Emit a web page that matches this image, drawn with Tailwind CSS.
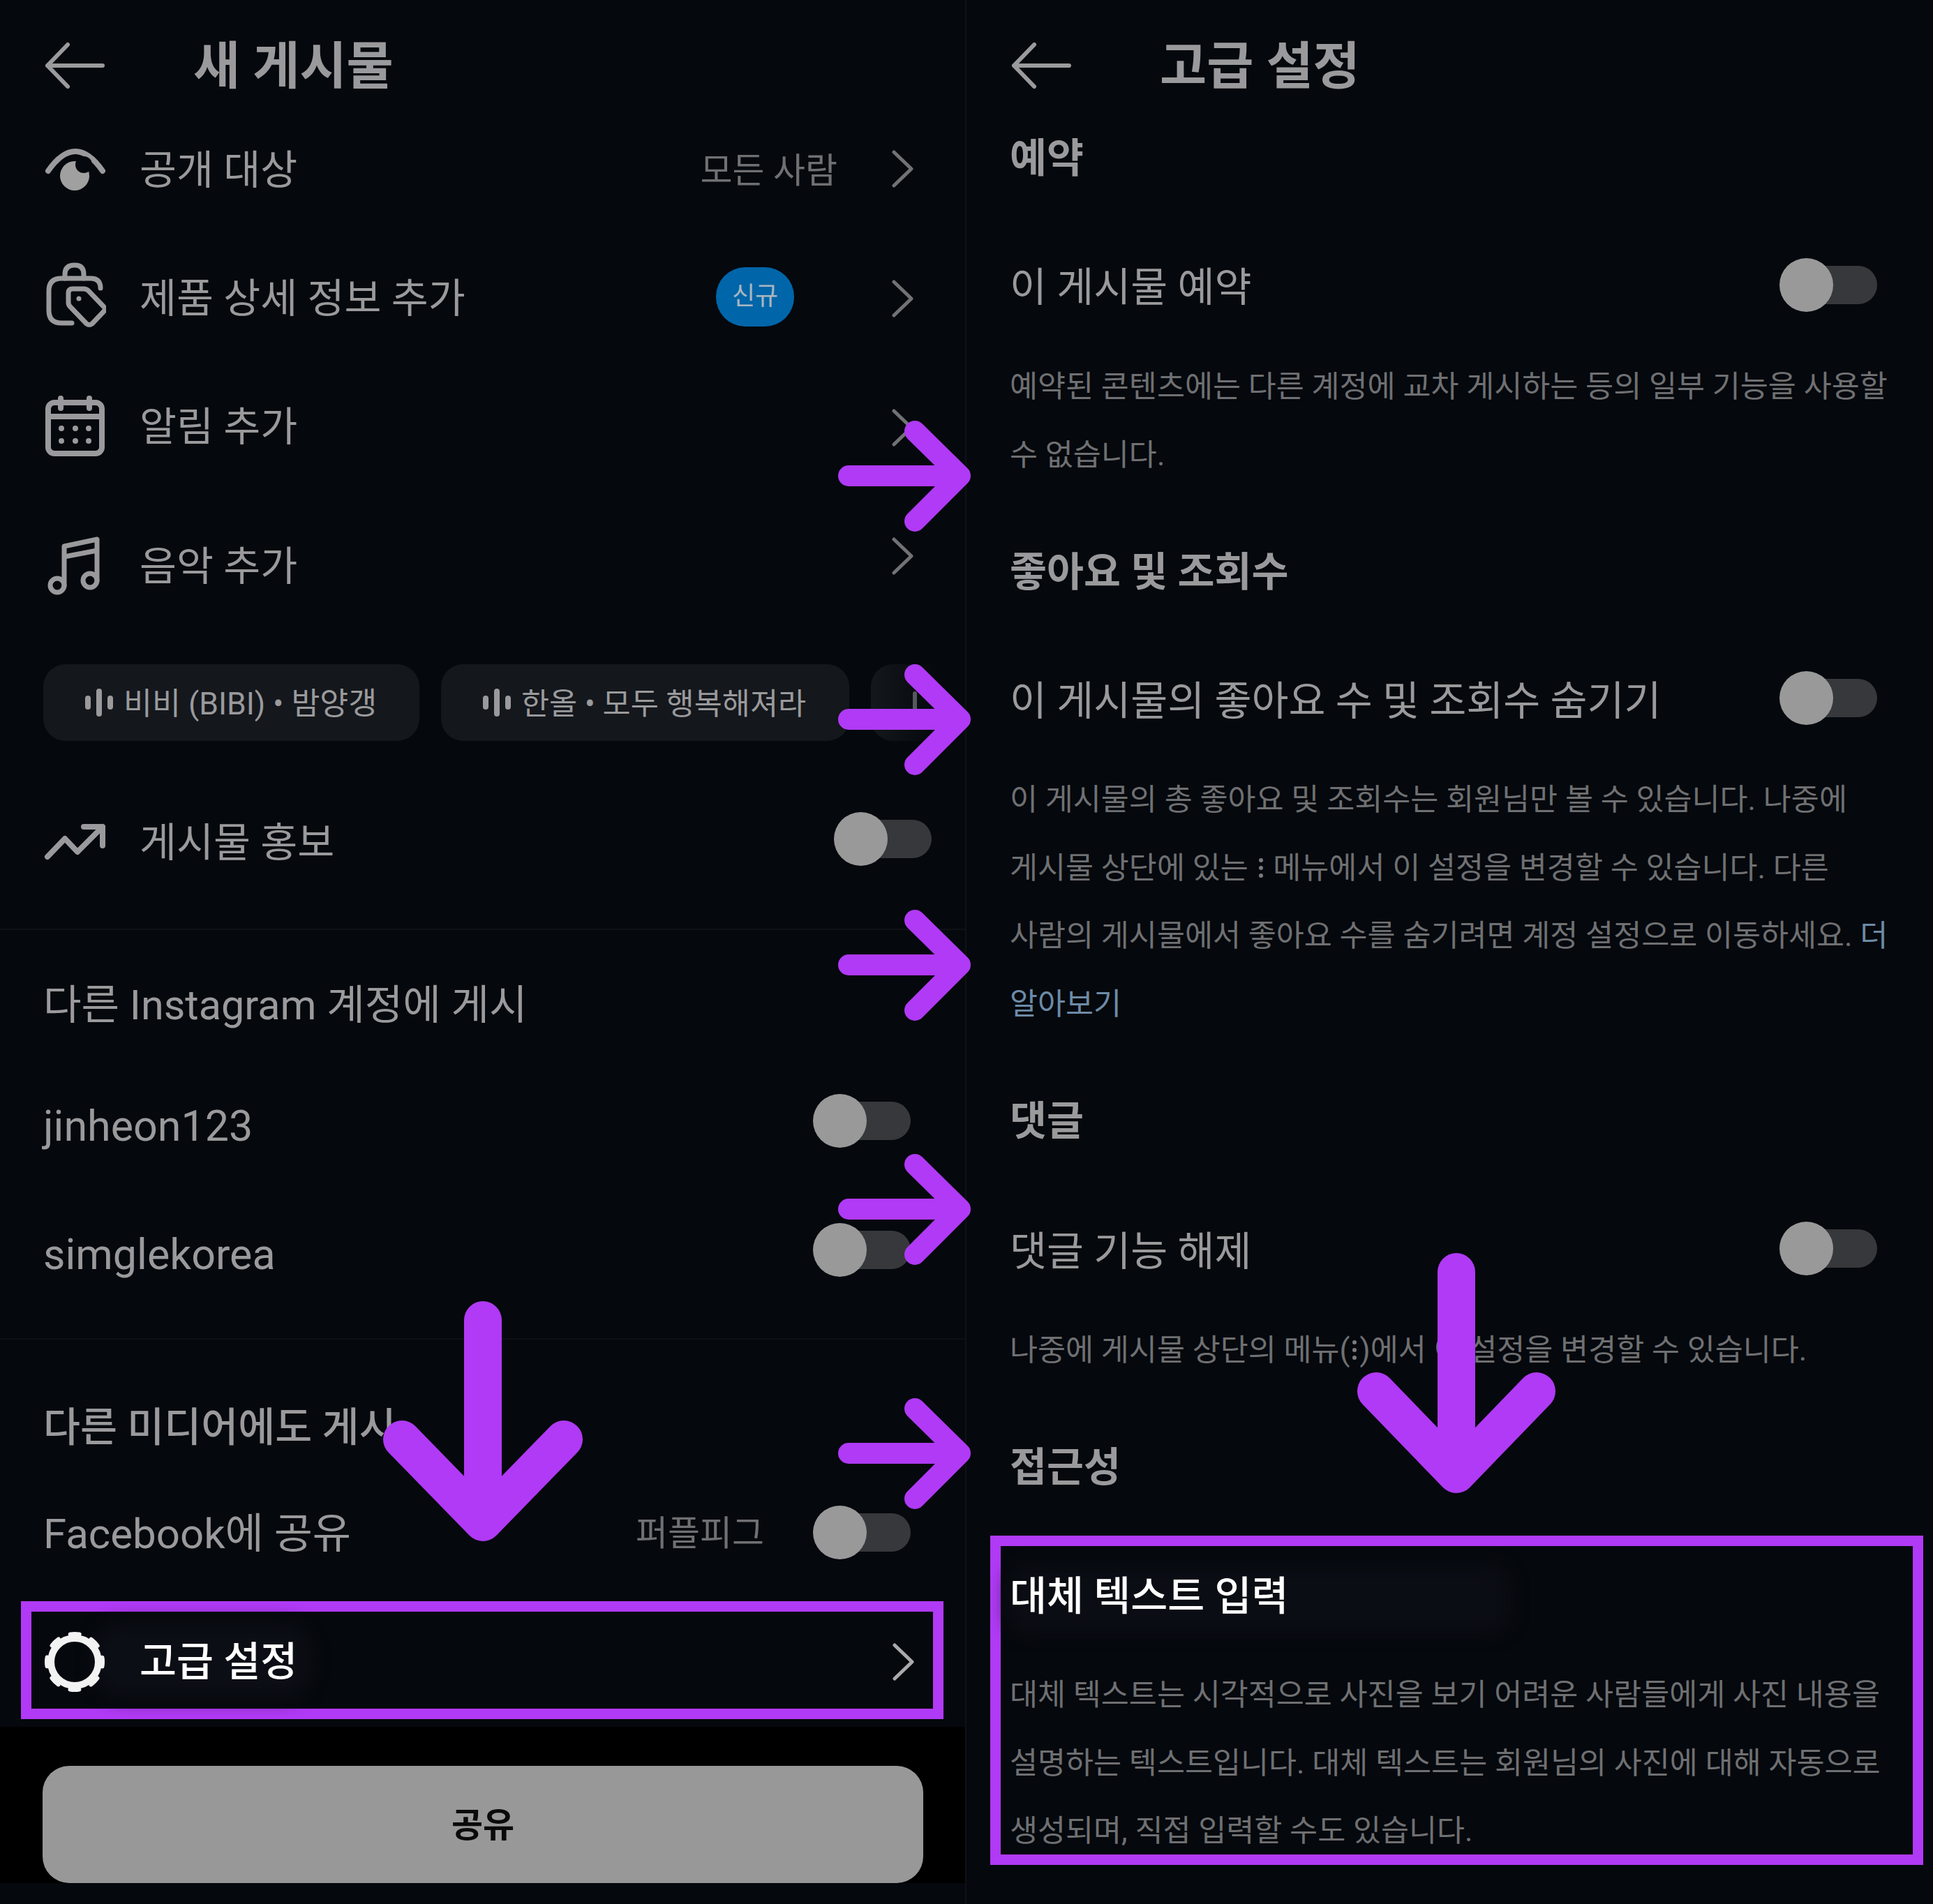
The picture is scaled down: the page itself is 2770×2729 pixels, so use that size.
<!DOCTYPE html>
<html lang="ko">
<head>
  <meta charset="UTF-8">
  <title>새 게시물 / 고급 설정</title>
  <script src="https://cdn.jsdelivr.net/npm/@tailwindcss/browser@4"></script>
</head>
<body class="relative w-[2770px] h-[2729px] overflow-hidden bg-[#05080d] text-[#9a9a9c] text-[57.6px] font-[Roboto,'Noto_Sans_CJK_KR',sans-serif]">
  <div class="grid grid-cols-[1385px_1385px] h-full">

    <!-- left screen: new post -->
    <section class="border-r-2 border-[#0e1116] h-full">
      <header class="flex items-center h-[184px] pl-[62px]">
        <svg class="w-[215px] h-[90px] shrink-0" viewBox="0 0 215 90" fill="none" stroke="#9a9a9c" stroke-width="6" stroke-linecap="round" stroke-linejoin="round"><path d="M85 47H6M35 17L6 47L35 77"/></svg>
        <h1 class="pt-[7px] text-[73px] font-bold leading-none">새 게시물</h1>
      </header>

      <div class="flex items-center h-[116px] pl-[62px] pr-[74px]">
        <svg class="w-[90px] h-[90px] shrink-0" viewBox="0 0 90 90" fill="none" stroke="#9a9a9c" stroke-width="8" stroke-linecap="round"><path d="M7 48Q46 -8 85 48"/><circle cx="45" cy="55" r="21" fill="#a0a0a0" stroke="none"/><circle cx="58" cy="39" r="12" fill="#05080d" stroke="none"/></svg>
        <span class="ml-[48px] pt-[7px]">공개 대상</span>
        <span class="ml-auto pt-[7px] text-[50px] text-[#6f7072]">모든 사람</span>
        <svg class="ml-[77px] w-[32px] h-[54px] shrink-0" viewBox="0 0 32 54" fill="none" stroke="#717274" stroke-width="5" stroke-linecap="round" stroke-linejoin="round"><path d="M4 3L29 27L4 51"/></svg>
      </div>

      <div class="flex items-center h-[250px] pl-[62px] pr-[74px]">
        <svg class="w-[90px] h-[100px] shrink-0" viewBox="0 0 90 100" fill="none" stroke="#9a9a9c" stroke-width="7" stroke-linecap="round" stroke-linejoin="round"><path d="M41 88H26Q8 88 8 70V42Q8 24 26 24H68Q82 24 82 38"/><path d="M31 24V18Q31 5 45 5Q58 5 58 18V24"/><path d="M42 39H58Q62 39 65 42L88 66Q90 68 88 70L70 89Q66 92 62 89L38 64Q36 62 36 58V45Q36 39 42 39Z"/><circle cx="51" cy="53" r="3.5" fill="#9a9a9c" stroke="none"/></svg>
        <span class="ml-[48px] pt-[9px]">제품 상세 정보 추가</span>
        <span class="ml-auto flex items-center justify-center w-[112px] h-[85px] rounded-[42px] bg-[#0065a9] text-[36px] text-[#a9b6c0]">신규</span>
        <svg class="ml-[139px] mt-[6px] w-[32px] h-[54px] shrink-0" viewBox="0 0 32 54" fill="none" stroke="#717274" stroke-width="5" stroke-linecap="round" stroke-linejoin="round"><path d="M4 3L29 27L4 51"/></svg>
      </div>

      <div class="flex items-center h-[120px] pl-[62px] pr-[74px]">
        <svg class="w-[90px] h-[90px] shrink-0" viewBox="0 0 90 90" fill="none" stroke="#9a9a9c" stroke-width="8" stroke-linecap="round" stroke-linejoin="round"><rect x="7" y="12" width="77" height="73" rx="9"/><path d="M7 32H84M25 6V20M66 6V20"/><g fill="#9a9a9c" stroke="none"><circle cx="26" cy="49" r="4"/><circle cx="46" cy="49" r="4"/><circle cx="65" cy="49" r="4"/><circle cx="26" cy="67" r="4"/><circle cx="46" cy="67" r="4"/><circle cx="65" cy="67" r="4"/></g></svg>
        <span class="ml-[48px] pt-[6px]">알림 추가</span>
        <svg class="ml-auto mt-[6px] w-[32px] h-[54px] shrink-0" viewBox="0 0 32 54" fill="none" stroke="#717274" stroke-width="5" stroke-linecap="round" stroke-linejoin="round"><path d="M4 3L29 27L4 51"/></svg>
      </div>

      <div class="flex items-center h-[130px] mt-[70px] pl-[62px] pr-[74px]">
        <svg class="w-[90px] h-[90px] shrink-0 mt-[10px]" viewBox="0 0 90 90" fill="none" stroke="#9a9a9c" stroke-width="7" stroke-linecap="round" stroke-linejoin="round"><path d="M30 74V18L77 8V67M30 33L77 24"/><circle cx="20" cy="74" r="10"/><circle cx="67" cy="67" r="10"/></svg>
        <span class="ml-[48px] pt-[17px]">음악 추가</span>
        <svg class="ml-auto mb-[16px] w-[32px] h-[54px] shrink-0" viewBox="0 0 32 54" fill="none" stroke="#717274" stroke-width="5" stroke-linecap="round" stroke-linejoin="round"><path d="M4 3L29 27L4 51"/></svg>
      </div>

      <div class="flex gap-[31px] h-[110px] mt-[82px] pl-[62px] overflow-hidden">
        <div class="flex items-center shrink-0 w-[539px] pl-[60px] rounded-[32px] bg-[#14171c] text-[44.5px]">
          <span class="flex items-center gap-[8px] mr-[15px]"><i class="w-[8px] h-[20px] rounded-full bg-[#9a9a9c]"></i><i class="w-[8px] h-[40px] rounded-full bg-[#9a9a9c]"></i><i class="w-[8px] h-[20px] rounded-full bg-[#9a9a9c]"></i></span>
          <span class="pt-[5px]">비비 (BIBI) • 밤양갱</span>
        </div>
        <div class="flex items-center shrink-0 w-[585px] pl-[60px] rounded-[32px] bg-[#14171c] text-[43.6px]">
          <span class="flex items-center gap-[8px] mr-[15px]"><i class="w-[8px] h-[20px] rounded-full bg-[#9a9a9c]"></i><i class="w-[8px] h-[40px] rounded-full bg-[#9a9a9c]"></i><i class="w-[8px] h-[20px] rounded-full bg-[#9a9a9c]"></i></span>
          <span class="pt-[5px]">한올 • 모두 행복해져라</span>
        </div>
        <div class="flex items-center shrink-0 w-[100px] pl-[60px] rounded-l-[32px] bg-gradient-to-r from-[#14171c] to-[#05080d]">
          <i class="w-[6px] h-[32px] rounded-full bg-[#55585c]"></i>
        </div>
      </div>

      <div class="h-[271px] pt-[101px] border-b-2 border-[#0e1116]">
        <div class="flex items-center h-[78px] pl-[62px] pr-[48px]">
          <svg class="w-[90px] h-[90px] shrink-0 mt-[6px]" viewBox="0 0 90 90" fill="none" stroke="#9a9a9c" stroke-width="8" stroke-linecap="round" stroke-linejoin="round"><path d="M6 68L31 42L49 61L85 25M58 25H85V52"/></svg>
          <span class="ml-[48px] pt-[15px]">게시물 홍보</span>
          <div class="ml-auto flex items-center"><div class="relative z-10 w-[77px] h-[77px] rounded-full bg-[#999999]"></div><div class="w-[103px] h-[55px] -ml-[40px] rounded-full bg-[#36383b]"></div></div>
        </div>
      </div>

      <div class="h-[587px] pt-[60px] border-b-2 border-[#0e1116]">
        <div class="flex items-center h-[90px] pl-[62px] pt-[7px] text-[59.3px]">다른 Instagram 계정에 게시</div>
        <div class="flex items-center h-[120px] mt-[63px] pl-[62px] pr-[78px]">
          <span class="mt-[18px] text-[61px]">jinheon123</span>
          <div class="ml-auto flex items-center"><div class="relative z-10 w-[77px] h-[77px] rounded-full bg-[#999999]"></div><div class="w-[103px] h-[55px] -ml-[40px] rounded-full bg-[#36383b]"></div></div>
        </div>
        <div class="flex items-center h-[120px] mt-[65px] pl-[62px] pr-[78px]">
          <span class="mt-[16px] text-[61px]">simglekorea</span>
          <div class="ml-auto flex items-center"><div class="relative z-10 w-[77px] h-[77px] rounded-full bg-[#999999]"></div><div class="w-[103px] h-[55px] -ml-[40px] rounded-full bg-[#36383b]"></div></div>
        </div>
      </div>

      <div class="flex items-center h-[80px] mt-[84px] pl-[62px] pt-[6px] font-medium">다른 미디어에도 게시</div>
      <div class="flex items-center h-[100px] mt-[62px] pl-[62px] pr-[78px]">
        <span class="mt-[6px] text-[60px]">Facebook에 공유</span>
        <span class="ml-auto mr-[70px] pt-[4px] text-[50px] text-[#6f7072]">퍼플피그</span>
        <div class="flex items-center"><div class="relative z-10 w-[77px] h-[77px] rounded-full bg-[#999999]"></div><div class="w-[103px] h-[55px] -ml-[40px] rounded-full bg-[#36383b]"></div></div>
      </div>

      <div class="relative flex items-center w-[1322px] h-[169px] mt-[49px] ml-[30px] pt-[4px] pl-[17px] pr-[27px] border-[15px] border-[#b03af5] text-white">
        <i class="absolute left-[90px] top-[15px] w-[310px] h-[110px] rounded-[40px] bg-[#0b0e14] blur-md"></i>
        <svg class="relative w-[90px] h-[90px] shrink-0" viewBox="0 0 90 90" fill="none" stroke="#f2f2f2"><circle cx="45" cy="45" r="34" stroke-width="10"/><circle cx="45" cy="45" r="40" stroke-width="6" stroke-linecap="round" stroke-dasharray="13 18.4" stroke-dashoffset="6.5"/></svg>
        <span class="relative ml-[48px] pt-[3px] font-medium">고급 설정</span>
        <svg class="relative ml-auto w-[32px] h-[54px] shrink-0" viewBox="0 0 32 54" fill="none" stroke="#a9aaac" stroke-width="5" stroke-linecap="round" stroke-linejoin="round"><path d="M4 3L29 27L4 51"/></svg>
      </div>

      <div class="h-[224px] mt-[11px] pt-[56px] pl-[61px] bg-black">
        <button class="flex items-center justify-center w-[1262px] h-[168px] rounded-[38px] bg-[#989898] pt-[4px] text-[49px] font-bold text-[#0a0a0a]">공유</button>
      </div>
    </section>

    <!-- right screen: advanced settings -->
    <section class="h-full pl-[62px]">
      <header class="flex items-center h-[184px]">
        <svg class="w-[215px] h-[90px] shrink-0" viewBox="0 0 215 90" fill="none" stroke="#9a9a9c" stroke-width="6" stroke-linecap="round" stroke-linejoin="round"><path d="M85 47H6M35 17L6 47L35 77"/></svg>
        <h1 class="pt-[7px] text-[73px] font-bold leading-none">고급 설정</h1>
      </header>

      <h2 class="flex items-center h-[80px] pt-[8px] font-bold">예약</h2>
      <div class="flex items-center h-[80px] mt-[104px] pr-[80px]">
        <span class="pt-[11px]">이 게시물 예약</span>
        <div class="ml-auto flex items-center"><div class="relative z-10 w-[77px] h-[77px] rounded-full bg-[#999999]"></div><div class="w-[103px] h-[55px] -ml-[40px] rounded-full bg-[#36383b]"></div></div>
      </div>
      <p class="mt-[58px] text-[43.5px] leading-[97.6px] text-[#6f7072] whitespace-nowrap">예약된 콘텐츠에는 다른 계정에 교차 게시하는 등의 일부 기능을 사용할<br>수 없습니다.</p>

      <h2 class="flex items-center h-[80px] mt-[75px] pt-[10px] font-bold">좋아요 및 조회수</h2>
      <div class="flex items-center h-[80px] mt-[104px] pr-[80px]">
        <span class="pt-[11px]">이 게시물의 좋아요 수 및 조회수 숨기기</span>
        <div class="ml-auto flex items-center"><div class="relative z-10 w-[77px] h-[77px] rounded-full bg-[#999999]"></div><div class="w-[103px] h-[55px] -ml-[40px] rounded-full bg-[#36383b]"></div></div>
      </div>
      <p class="mt-[58px] text-[43.5px] leading-[97.6px] text-[#6f7072] whitespace-nowrap">이 게시물의 총 좋아요 및 조회수는 회원님만 볼 수 있습니다. 나중에<br>게시물 상단에 있는 <span class="inline-flex flex-col items-center gap-[5px] w-[14px] align-[23px]"><i class="w-[6px] h-[6px] rounded-full bg-[#7a7b7d]"></i><i class="w-[6px] h-[6px] rounded-full bg-[#7a7b7d]"></i><i class="w-[6px] h-[6px] rounded-full bg-[#7a7b7d]"></i></span> 메뉴에서 이 설정을 변경할 수 있습니다. 다른<br>사람의 게시물에서 좋아요 수를 숨기려면 계정 설정으로 이동하세요. <span class="text-[#6d8ba6]">더<br>알아보기</span></p>

      <h2 class="flex items-center h-[80px] mt-[76px] pt-[8px] font-bold">댓글</h2>
      <div class="flex items-center h-[80px] mt-[105px] pr-[80px]">
        <span class="pt-[11px]">댓글 기능 해제</span>
        <div class="ml-auto flex items-center"><div class="relative z-10 w-[77px] h-[77px] rounded-full bg-[#999999]"></div><div class="w-[103px] h-[55px] -ml-[40px] rounded-full bg-[#36383b]"></div></div>
      </div>
      <p class="mt-[57px] text-[43.5px] leading-[97.6px] text-[#6f7072] whitespace-nowrap">나중에 게시물 상단의 메뉴(<span class="inline-flex flex-col items-center gap-[5px] w-[14px] align-[23px]"><i class="w-[6px] h-[6px] rounded-full bg-[#7a7b7d]"></i><i class="w-[6px] h-[6px] rounded-full bg-[#7a7b7d]"></i><i class="w-[6px] h-[6px] rounded-full bg-[#7a7b7d]"></i></span>)에서 이 설정을 변경할 수 있습니다.</p>

      <h2 class="flex items-center h-[80px] mt-[75px] pt-[10px] font-bold">접근성</h2>
      <div class="relative w-[1337px] h-[472px] mt-[62px] -ml-[28px] pl-[13px] border-[15px] border-[#b03af5]">
        <i class="absolute left-[10px] top-[26px] w-[720px] h-[100px] rounded-[30px] bg-[#0a0d13] blur-md"></i>
        <h3 class="relative flex items-center h-[80px] mt-[29px] pt-[8px] text-white font-medium">대체 텍스트 입력</h3>
        <p class="relative mt-[56px] text-[43.5px] leading-[97.6px] text-[#6f7072] whitespace-nowrap">대체 텍스트는 시각적으로 사진을 보기 어려운 사람들에게 사진 내용을<br>설명하는 텍스트입니다. 대체 텍스트는 회원님의 사진에 대해 자동으로<br>생성되며, 직접 입력할 수도 있습니다.</p>
      </div>
    </section>
  </div>

  <!-- purple annotation arrows drawn on top of the screenshots -->
  <svg class="absolute inset-0 z-20 w-[2770px] h-[2729px] pointer-events-none" viewBox="0 0 2770 2729" fill="none" stroke="#b03af5" stroke-linecap="round" stroke-linejoin="round">
    <g stroke-width="30">
      <path d="M1216 682H1372M1311 618L1376 682L1311 747"/>
      <path d="M1216 1031H1372M1311 967L1376 1031L1311 1096"/>
      <path d="M1216 1383H1372M1311 1319L1376 1383L1311 1448"/>
      <path d="M1216 1733H1372M1311 1669L1376 1733L1311 1798"/>
      <path d="M1216 2083H1372M1311 2019L1376 2083L1311 2148"/>
    </g>
    <g stroke-width="54">
      <path d="M692 1892V2170M576 2063L692 2182L808 2063"/>
      <path d="M2087 1823V2100M1972 1994L2087 2113L2202 1994"/>
    </g>
  </svg>
</body>
</html>
